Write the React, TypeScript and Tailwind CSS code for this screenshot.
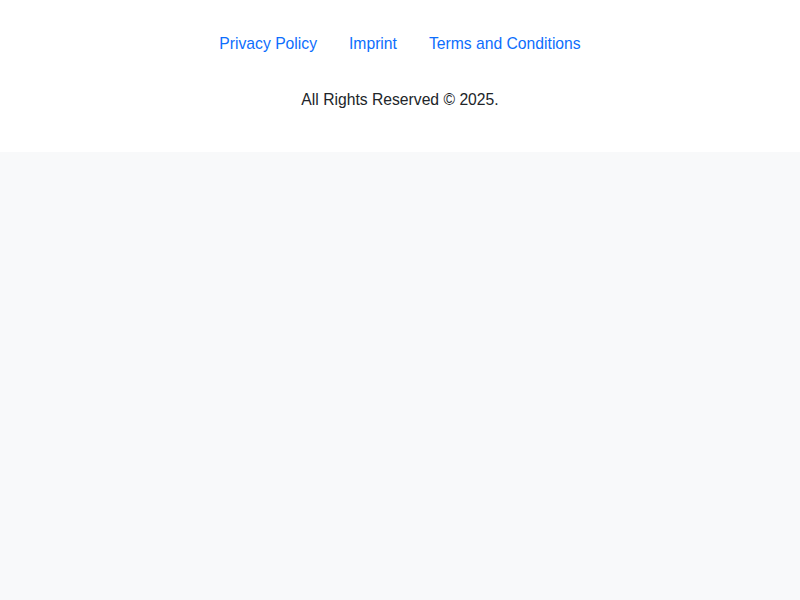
import {FC, memo} from 'react';

const links = [
  {label: 'Privacy Policy', href: '#privacy'},
  {label: 'Imprint', href: '#imprint'},
  {label: 'Terms and Conditions', href: '#terms'},
];

const Footer: FC = memo(() => (
  <footer className="bg-white pt-[32px] pb-[40px] text-center">
    <nav className="flex justify-center">
      {links.map(({label, href}) => (
        <a key={label} href={href} className="px-4 text-[15.7px] leading-6 text-[#0d6efd] hover:underline">
          {label}
        </a>
      ))}
    </nav>
    <p className="mt-8 text-[15.7px] leading-6 text-[#212529]">All Rights Reserved © 2025.</p>
  </footer>
));

Footer.displayName = 'Footer';

const App: FC = () => (
  <div className="min-h-[600px] bg-[#f8f9fa] font-['Liberation_Sans',Arial,sans-serif]">
    <Footer />
  </div>
);

export default App;
